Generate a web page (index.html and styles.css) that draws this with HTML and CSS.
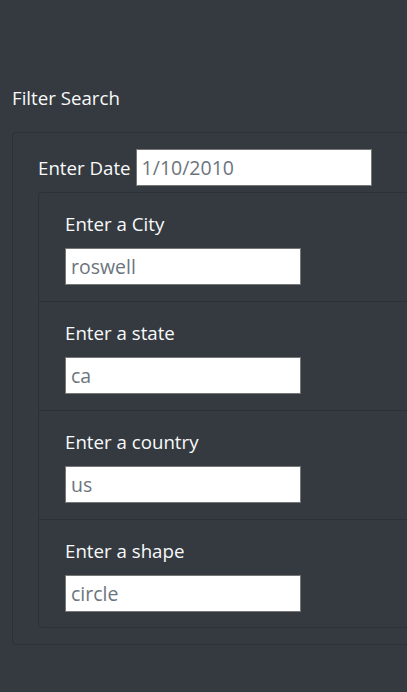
FILE: index.html
```html
<!DOCTYPE html>
<html lang="en">
<head>
<meta charset="utf-8">
<title>Filter Search</title>
<link rel="stylesheet" href="styles.css">
</head>
<body>
<main class="page">
  <h1 class="title">Filter Search</h1>
  <form class="card">
    <div class="date-row">
      <label class="date-label" for="date">Enter Date</label>
      <input class="field" id="date" type="text" placeholder="1/10/2010">
    </div>
    <ul class="list">
      <li class="item">
        <label class="item-label" for="city">Enter a City</label>
        <input class="field" id="city" type="text" placeholder="roswell">
      </li>
      <li class="item">
        <label class="item-label" for="state">Enter a state</label>
        <input class="field" id="state" type="text" placeholder="ca">
      </li>
      <li class="item">
        <label class="item-label" for="country">Enter a country</label>
        <input class="field" id="country" type="text" placeholder="us">
      </li>
      <li class="item">
        <label class="item-label" for="shape">Enter a shape</label>
        <input class="field" id="shape" type="text" placeholder="circle">
      </li>
    </ul>
  </form>
</main>
</body>
</html>
```

FILE: styles.css
```css
html, body {
  margin: 0;
  padding: 0;
  background: #343a40;
  overflow: hidden;
}
body {
  font-family: "Open Sans", "Noto Sans", sans-serif;
  color: #f8f9fa;
  width: 407px;
  height: 692px;
}
.page {
  padding: 85px 0 0 12px;
  width: 700px;
}
.title {
  margin: 0 0 21px 0;
  font-size: 18.7px;
  font-weight: 400;
  line-height: 26px;
}
.card {
  border: 1px solid rgba(0, 0, 0, 0.15);
  border-radius: 4px;
  padding: 16px 0 16px 25px;
  margin: 0;
}
.date-row {
  display: flex;
  align-items: center;
  gap: 5px;
  margin-bottom: 6px;
}
.date-label {
  font-size: 18.7px;
  line-height: 26px;
}
.field {
  box-sizing: border-box;
  width: 236px;
  height: 37px;
  margin: 0;
  padding: 0 5px;
  border: 1px solid #767676;
  background: #fff;
  font-family: "Open Sans", "Noto Sans", sans-serif;
  font-size: 19.5px;
  color: #6c757d;
}
.field::placeholder {
  color: #6c757d;
  opacity: 1;
}
.list {
  list-style: none;
  margin: 0;
  padding: 0;
  border: 1px solid rgba(0, 0, 0, 0.15);
  border-radius: 4px;
}
.item {
  display: flex;
  flex-direction: column;
  align-items: flex-start;
  gap: 11px;
  padding: 18px 26px 16px 26px;
}
.item + .item {
  border-top: 1px solid rgba(0, 0, 0, 0.15);
}
.item:last-child {
  padding-bottom: 15px;
}
.item-label {
  font-size: 18.7px;
  line-height: 26px;
}
```
